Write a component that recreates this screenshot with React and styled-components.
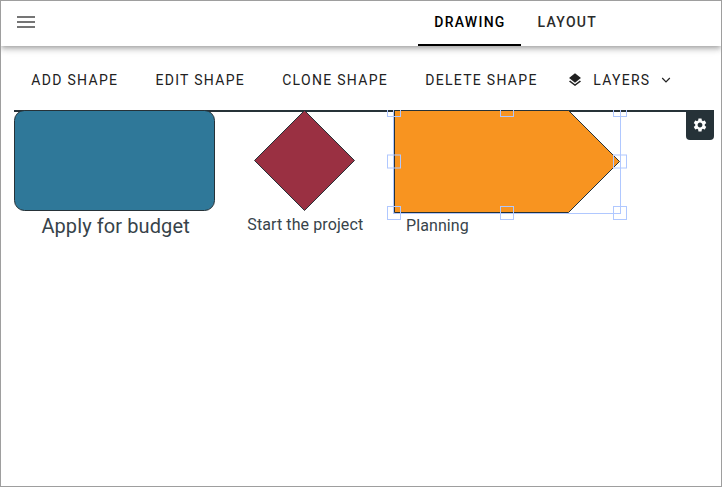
import React from "react";
import styled, { createGlobalStyle } from "styled-components";
import { MdLayers, MdSettings } from "react-icons/md";

const GlobalStyle = createGlobalStyle`
  * { box-sizing: border-box; }
  body { margin: 0; background: #fff; font-family: Roboto, "Liberation Sans", sans-serif; }
`;

const Frame = styled.div`
  width: 722px;
  height: 487px;
  border: 1px solid #9e9e9e;
  background: #fff;
  overflow: hidden;
`;

const Header = styled.header`
  display: flex;
  align-items: center;
  justify-content: space-between;
  height: 45px;
  padding: 0 109px 0 16px;
  background: #fff;
  box-shadow: 0 2px 4px -1px rgba(0, 0, 0, 0.2), 0 4px 5px 0 rgba(0, 0, 0, 0.14),
    0 1px 10px 0 rgba(0, 0, 0, 0.12);
`;

const MenuButton = styled.button`
  display: flex;
  padding: 0;
  margin-top: -3px;
  border: 0;
  background: none;
  color: #757575;
`;

const Tabs = styled.nav`
  display: flex;
  gap: 1px;
  height: 100%;
`;

const Tab = styled.button`
  height: 45px;
  padding: 0 15px 0 16px;
  border: 0;
  border-bottom: 2px solid ${(p) => (p.$active ? "#000" : "transparent")};
  background: none;
  color: ${(p) => (p.$active ? "#000" : "#2b2b2b")};
  font: 500 14px/43px Roboto, "Liberation Sans", sans-serif;
  letter-spacing: 1.25px;
`;

const Toolbar = styled.div`
  display: flex;
  align-items: center;
  gap: 37.1px;
  height: 64px;
  padding: 4px 0 0 30.3px;
`;

const ToolButton = styled.button`
  display: flex;
  align-items: center;
  padding: 0;
  margin-left: ${(p) => p.$shift || 0}px;
  border: 0;
  background: none;
  color: #212121;
  font: 400 14px/20px Roboto, "Liberation Sans", sans-serif;
  letter-spacing: 1.3px;
  white-space: nowrap;
`;

const ToolText = styled.span`
  margin: 0 11px 0 10px;
`;

const Canvas = styled.main`
  position: relative;
  width: 700px;
  height: 370px;
  margin-left: 13px;
  border-top: 2px solid #263238;
`;

const Drawing = styled.svg`
  position: absolute;
  left: 0;
  top: -2px;
  display: block;
`;

const ShapeLabel = styled.span`
  position: absolute;
  left: ${(p) => p.$x}px;
  top: ${(p) => p.$y}px;
  color: #37434a;
  font-weight: 400;
  font-size: ${(p) => p.$size}px;
  line-height: 24px;
  letter-spacing: 0.1px;
  white-space: nowrap;
`;

const SettingsButton = styled.button`
  position: absolute;
  right: 0;
  top: -2px;
  display: flex;
  align-items: center;
  justify-content: center;
  width: 28px;
  height: 30px;
  padding: 0;
  border: 0;
  border-radius: 0 0 4px 4px;
  background: #263238;
  color: #fff;
`;

const handles = [
  [373.5, -6.5],
  [486.5, -6.5],
  [599.5, -6.5],
  [373.5, 45],
  [599.5, 45],
  [373.5, 96.5],
  [486.5, 96.5],
  [599.5, 96.5],
];

const labels = [
  { text: "Apply for budget", x: 27.4, y: 102, size: 20 },
  { text: "Start the project", x: 233.3, y: 101, size: 16 },
  { text: "Planning", x: 392, y: 102, size: 16 },
];

export default function App() {
  return (
    <Frame>
      <GlobalStyle />
      <Header>
        <MenuButton aria-label="Menu">
          <svg width="18" height="12" fill="currentColor" shapeRendering="crispEdges">
            <path d="M0 0h18v2H0zM0 5h18v2H0zM0 10h18v2H0z" />
          </svg>
        </MenuButton>
        <Tabs>
          <Tab $active>DRAWING</Tab>
          <Tab>LAYOUT</Tab>
        </Tabs>
      </Header>
      <Toolbar>
        <ToolButton>ADD SHAPE</ToolButton>
        <ToolButton>EDIT SHAPE</ToolButton>
        <ToolButton>CLONE SHAPE</ToolButton>
        <ToolButton>DELETE SHAPE</ToolButton>
        <ToolButton $shift={-7.6}>
          <MdLayers size={16} />
          <ToolText>LAYERS</ToolText>
          <svg width="10" height="6" viewBox="0 0 10 6" fill="none" stroke="currentColor" strokeWidth="1.2">
            <path d="M1.2 1L5 4.8 8.8 1" />
          </svg>
        </ToolButton>
      </Toolbar>
      <Canvas>
        <Drawing width="700" height="370">
          <g stroke="#263238">
            <rect x="0.5" y="0.5" width="200" height="100" rx="10" fill="#2f7899" />
            <path d="M290.5 0.5l50 50-50 50-50-50z" fill="#9a3042" />
            <path d="M380.5 0.5h174l51 51-51 51h-174z" fill="#f89420" />
          </g>
          <g fill="none" stroke="#b0c8ff">
            <rect x="379.5" y="-0.5" width="227" height="104" />
            {handles.map(([x, y]) => (
              <rect key={`${x},${y}`} x={x} y={y} width="13" height="13" />
            ))}
          </g>
        </Drawing>
        {labels.map((l) => (
          <ShapeLabel key={l.text} $x={l.x} $y={l.y} $size={l.size}>
            {l.text}
          </ShapeLabel>
        ))}
        <SettingsButton aria-label="Settings">
          <MdSettings size={16} />
        </SettingsButton>
      </Canvas>
    </Frame>
  );
}
